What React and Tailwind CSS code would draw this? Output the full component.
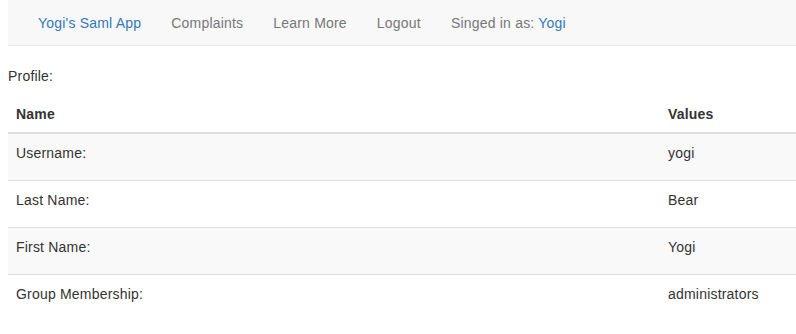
const rows = [
  { name: "Username:", value: "yogi" },
  { name: "Last Name:", value: "Bear" },
  { name: "First Name:", value: "Yogi" },
  { name: "Group Membership:", value: "administrators" },
];

function NavBar() {
  return (
    <nav className="flex h-[46px] items-center border-b border-[#e7e7e7] bg-[#f8f8f8] px-[15px]">
      <a href="#" className="px-[15px] text-[#337ab7]">
        Yogi&apos;s Saml App
      </a>
      <a href="#" className="px-[15px] text-[#777]">
        Complaints
      </a>
      <a href="#" className="px-[15px] text-[#777]">
        Learn More
      </a>
      <a href="#" className="px-[15px] text-[#777]">
        Logout
      </a>
      <span className="px-[15px] text-[#777]">
        Singed in as: <span className="text-[#337ab7]">Yogi</span>
      </span>
    </nav>
  );
}

export default function App() {
  return (
    <div className="min-h-screen bg-white pl-2 font-['Liberation_Sans',Arial,sans-serif] text-[14px] leading-[20px] tracking-[0.2px] text-[#333]">
      <NavBar />
      <div className="mt-5">Profile:</div>
      <table className="mt-[10px] w-full border-collapse">
        <thead>
          <tr className="border-b-2 border-[#ddd]">
            <th className="w-[652px] px-2 py-2 text-left font-bold">Name</th>
            <th className="px-2 py-2 text-left font-bold">Values</th>
          </tr>
        </thead>
        <tbody>
          {rows.map((row, i) => (
            <tr
              key={row.name}
              className={
                (i % 2 === 0 ? "bg-[#f9f9f9] " : "") +
                (i < rows.length - 1 ? "border-b border-[#ddd]" : "")
              }
            >
              <td className="px-2 pt-[9px] pb-[17px]">{row.name}</td>
              <td className="px-2 pt-[9px] pb-[17px]">{row.value}</td>
            </tr>
          ))}
        </tbody>
      </table>
    </div>
  );
}
